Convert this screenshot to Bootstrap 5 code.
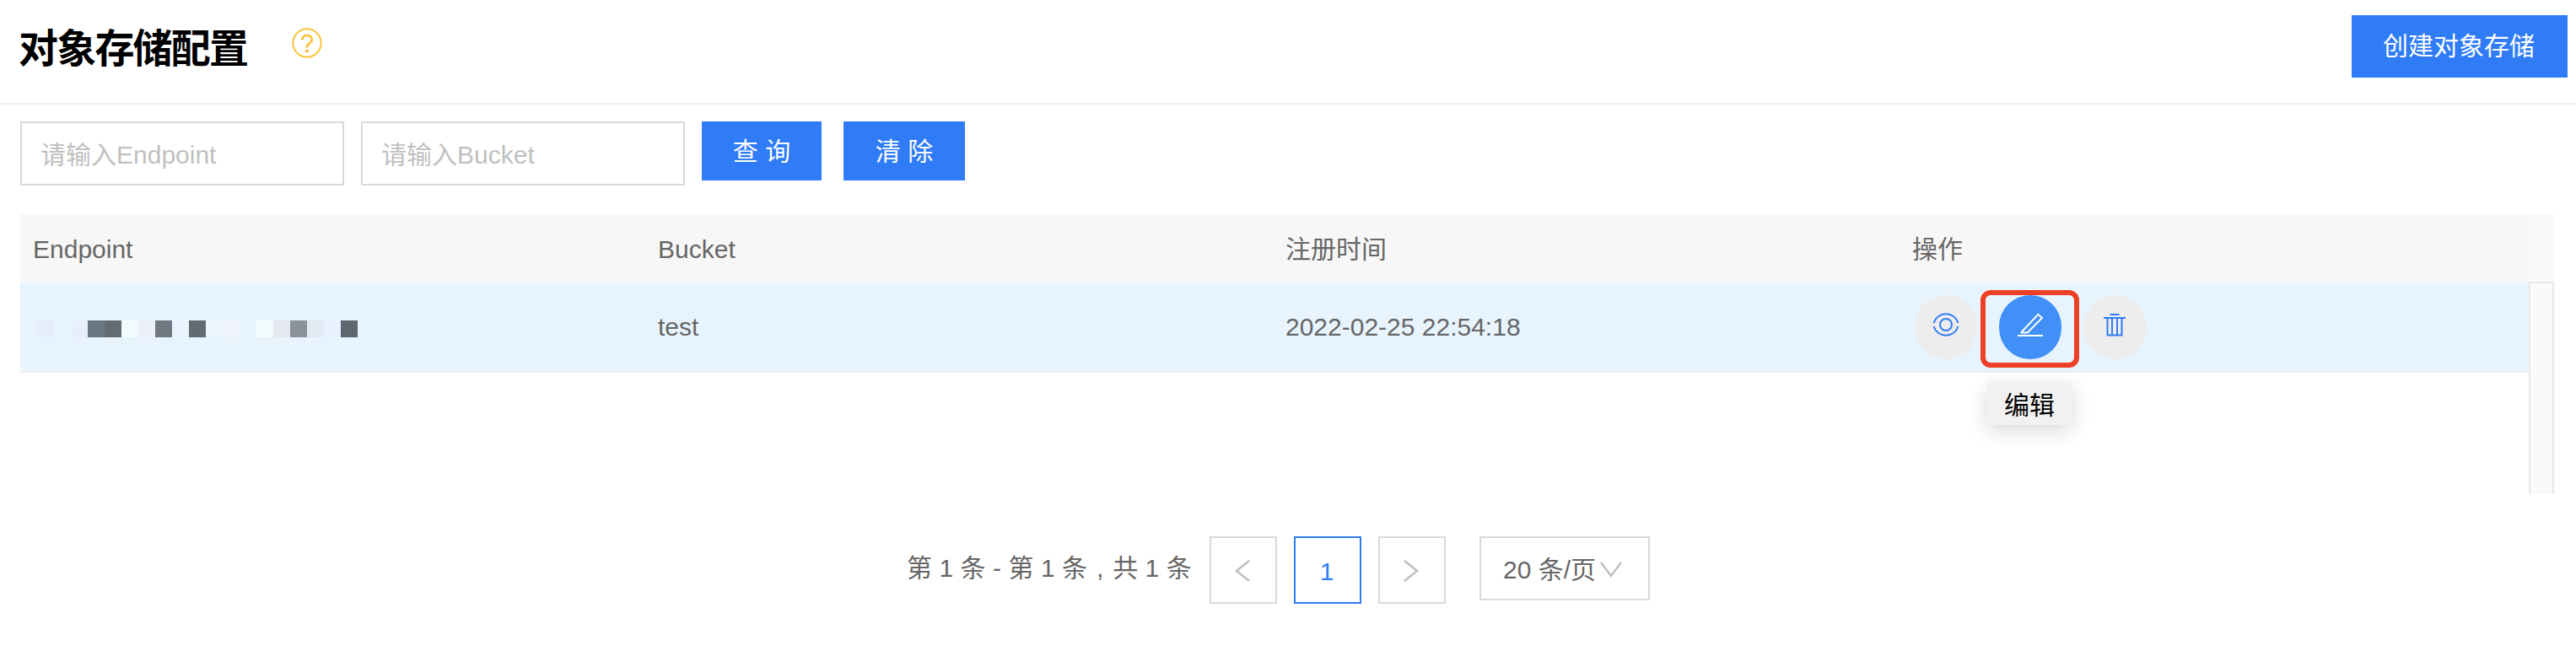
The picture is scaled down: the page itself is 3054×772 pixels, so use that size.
<!DOCTYPE html>
<html lang="zh-CN">
<head>
<meta charset="utf-8">
<title>对象存储配置</title>
<link href="https://cdn.jsdelivr.net/npm/bootstrap@5.3.0/dist/css/bootstrap.min.css" rel="stylesheet">
<style>
body{font-family:"Liberation Sans","Noto Sans CJK SC",sans-serif;font-size:30px;line-height:44px;color:#666;background:#fff;overflow:hidden}
.page-head{height:124px;border-bottom:2px solid #efefef;padding:18px 10px 0 22px}
.page-head h1{font-size:47px;line-height:56px;font-weight:700;letter-spacing:-1.8px;color:#000;margin:12px 0 0}
.help{width:36px;height:36px;margin:15px 0 0 53px}
.btn-main{--bs-btn-bg:#307cf7;--bs-btn-border-color:#307cf7;--bs-btn-color:#fff;--bs-btn-border-radius:0;--bs-btn-font-size:30px;--bs-btn-line-height:44px;--bs-btn-padding-x:0;--bs-btn-padding-y:0;height:70px;white-space:nowrap;padding-top:2px}
.btn-create{width:256px;height:74px;padding:0 2px 0 0}
.filters{padding:20px 24px 0}
.filters .form-control{width:384px;height:76px;border:2px solid #d9d9d9;border-radius:0;font-size:30px;padding:4px 22px 0;margin-right:20px;line-height:44px}
.filters .form-control::placeholder{color:#bfbfbf;opacity:1}
.grid-wrap{margin:34px 26px 0 24px;height:332px}
.grid-main{width:2974px}
.grid-head{height:82px;background:#f7f7f7;padding-top:2px}
.grid-line{height:106px;background:#e7f4fe;border-bottom:2px solid #eee}
.cell{width:743px;padding-left:15px}
.cell:first-child{width:741px}
.cell:nth-child(2){width:744px}
.gutter{width:30px;background:#fafafa}
.gutter-top{height:80px}
.gutter-track{border:2px solid #e8e8e8;border-bottom:0}
.mosaic{padding-left:5px;margin-top:4px}
.mosaic i{width:20px;height:20px}
.act{width:74px;height:76px;border-radius:37px;background:#ededed;margin-right:26px;color:#307cf7;padding-bottom:6px}
.act:first-child{margin-left:3px}
.act-on{background:#4090f7;color:#fff}
.act svg{fill:none;stroke:currentColor;stroke-width:2}
.focus-box{left:-22px;top:-6px;width:117px;height:92px;border:6px solid #ee4026;border-radius:12px}
.tip{left:-14px;top:104px;width:100px;height:50px;padding-top:3px;background:#f1f1f1;color:#000;box-shadow:0 6px 24px rgba(0,0,0,.16);z-index:2}
.pager{padding:50px 0 0 1075px}
.pager-info{margin-right:21px;padding-top:16px;width:338px;white-space:nowrap;letter-spacing:.06px}
.comma{width:30px;text-align:center}
.pg{width:80px;height:80px;border:2px solid #d9d9d9;margin-right:20px}
.pg-on{border-color:#307cf7;color:#307cf7;padding:3px 2px 0 0}
.pg svg,.size svg{fill:none;stroke:#bfbfbf;stroke-width:2.5}
.pg svg{margin:2px 2px 0 0}
.size{width:202px;height:76px;border:2px solid #d9d9d9;margin-left:20px;padding:3px 0 0 26px;white-space:nowrap}
</style>
</head>
<body>
<header class="page-head d-flex align-items-start">
  <h1>对象存储配置</h1>
  <svg class="help" viewBox="0 0 36 36" fill="none" stroke="#f9c43c" stroke-width="2"><circle cx="18" cy="18" r="16.7"/><path d="M12.200 14.500c0-3.600 2.500-5.700 5.800-5.700s5.800 2.100 5.800 5.200c0 4.200-5.800 4-5.800 8.800v.6" stroke-width="2.800"/><circle cx="18" cy="27.500" r="2.100" fill="#f9c43c" stroke="none"/></svg>
  <button class="btn btn-main btn-create ms-auto">创建对象存储</button>
</header>
<form class="filters d-flex align-items-start">
  <input class="form-control" placeholder="请输入Endpoint">
  <input class="form-control" placeholder="请输入Bucket">
  <button type="button" class="btn btn-main" style="width:142px">查 询</button>
  <button type="button" class="btn btn-main" style="width:144px;margin-left:26px">清 除</button>
</form>
<main class="grid-wrap d-flex">
  <div class="grid-main">
    <div class="grid-head d-flex align-items-center">
      <div class="cell">Endpoint</div><div class="cell">Bucket</div><div class="cell">注册时间</div><div class="cell">操作</div>
    </div>
    <div class="grid-line d-flex align-items-center">
      <div class="cell"><div class="mosaic d-flex">
        <i style="background:#e6eefa"></i><i style="background:#e7f4ff"></i><i style="background:#e8eefb"></i><i style="background:#6c7881"></i><i style="background:#646b71"></i><i style="background:#f2fcff"></i><i style="background:#edf0fa"></i><i style="background:#707981"></i><i style="background:#e9f4ff"></i><i style="background:#636b72"></i><i style="background:#ecf6ff"></i><i style="background:#eff5fa"></i><i style="background:#e7f4ff"></i><i style="background:#f5fcff"></i><i style="background:#e4e9f0"></i><i style="background:#8b9299"></i><i style="background:#e3eaf4"></i><i style="background:#eaf1fe"></i><i style="background:#5e666e"></i>
      </div></div>
      <div class="cell">test</div>
      <div class="cell">2022-02-25 22:54:18</div>
      <div class="cell d-flex">
        <div class="act d-flex align-items-center justify-content-center"><svg width="32" height="28" viewBox="0 0 32 28"><circle cx="16" cy="14" r="7"/><path d="M1.500 12C3.500 5.500 9.200 1.300 16 1.300S28.500 5.500 30.500 12M1.500 16C3.500 22.500 9.200 26.700 16 26.700S28.500 22.500 30.500 16"/></svg></div>
        <div class="act act-on position-relative d-flex align-items-center justify-content-center">
          <svg width="32" height="30" viewBox="0 0 32 30"><path d="M1 28H31"/><path d="M5 24.500L25.300 2.800 30 7 12.700 24.500H4.500" stroke-width="1.900"/></svg>
          <span class="focus-box position-absolute"></span>
          <span class="tip position-absolute d-flex align-items-center justify-content-center">编辑</span>
        </div>
        <div class="act d-flex align-items-center justify-content-center"><svg width="28" height="28" viewBox="0 0 28 28"><path d="M8.500 2H19.500M1 6H27M5.500 6V26.500H22.500V6M11 6V26M17 6V26"/></svg></div>
      </div>
    </div>
  </div>
  <div class="gutter-col d-flex flex-column"><div class="gutter gutter-top"></div><div class="gutter gutter-track flex-grow-1"></div></div>
</main>
<nav class="pager d-flex align-items-start">
  <div class="pager-info">第 1 条 - 第 1 条<span class="comma d-inline-block">,</span>共 1 条</div>
  <div class="pg d-flex align-items-center justify-content-center"><svg width="18" height="28" viewBox="0 0 18 28"><path d="M17 2L2 14 17 26"/></svg></div>
  <div class="pg pg-on d-flex align-items-center justify-content-center">1</div>
  <div class="pg d-flex align-items-center justify-content-center"><svg width="18" height="28" viewBox="0 0 18 28"><path d="M1 2L16 14 1 26"/></svg></div>
  <div class="size d-flex align-items-center">20 条/页<svg class="ms-1" width="28" height="20" viewBox="0 0 28 20"><path d="M2 1L14 17 26 1"/></svg></div>
</nav>
<script src="https://cdn.jsdelivr.net/npm/bootstrap@5.3.0/dist/js/bootstrap.bundle.min.js"></script>
</body>
</html>
